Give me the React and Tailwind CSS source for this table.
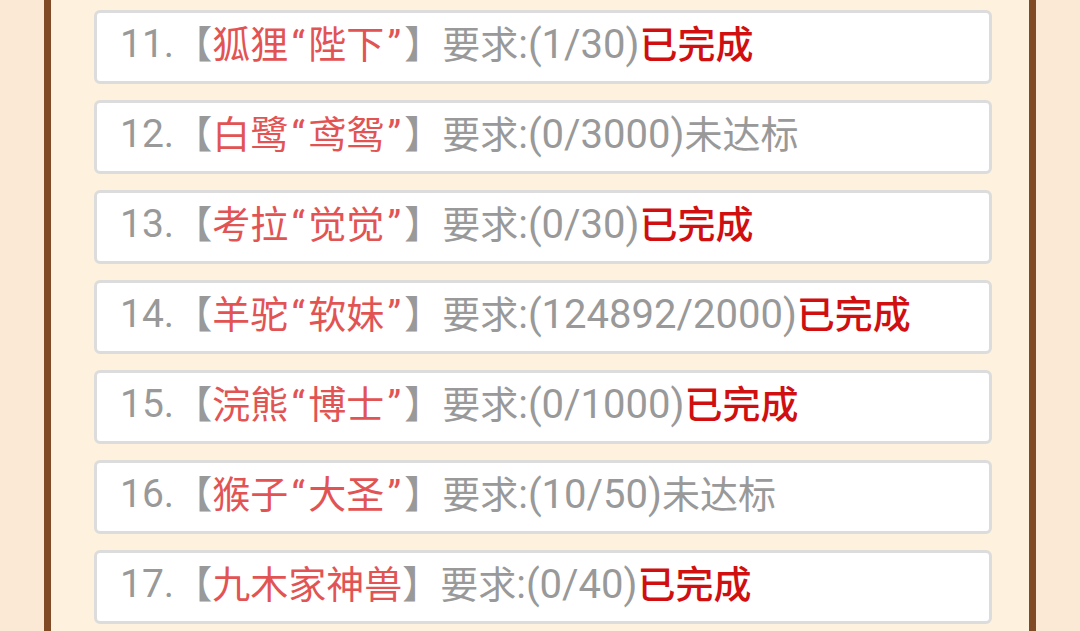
import React from 'react';

const tasks = [
  { no: 11, name: ['狐狸', '陛下'], req: '(1/30)', done: true },
  { no: 12, name: ['白鹭', '鸢鸳'], req: '(0/3000)', done: false },
  { no: 13, name: ['考拉', '觉觉'], req: '(0/30)', done: true },
  { no: 14, name: ['羊驼', '软妹'], req: '(124892/2000)', done: true },
  { no: 15, name: ['浣熊', '博士'], req: '(0/1000)', done: true },
  { no: 16, name: ['猴子', '大圣'], req: '(10/50)', done: false },
  { no: 17, name: ['九木家神兽'], req: '(0/40)', done: true },
];

function Name({ parts }) {
  if (parts.length === 1) return <span className="text-[#e25454]">{parts[0]}</span>;
  return (
    <span className="text-[#e25454]">
      {parts[0]}
      <span className="inline-block w-[20px] text-center">“</span>
      {parts[1]}
      <span className="inline-block w-[20px] text-center">”</span>
    </span>
  );
}

export default function App() {
  return (
    <div
      className="w-[1080px] h-[631px] overflow-hidden bg-[#fbe9d5] flex"
      style={{ fontFamily: 'Roboto, "Noto Sans CJK SC", sans-serif' }}
    >
      <div className="ml-[44px] w-[992px] h-full border-x-[7px] border-[#7f4a25] bg-[#fef1dd] pl-[43px] pr-[37px] pt-[10px]">
        <div className="flex flex-col gap-[16px]">
          {tasks.map((t) => (
            <div
              key={t.no}
              className="h-[74px] bg-white border-[3px] border-[#dcdcdc] rounded-[6px] flex items-center pl-[23px] pb-[5px] text-[38px] leading-none text-[#999999] whitespace-nowrap"
            >
              <span className="text-[39px]">{t.no}.</span>
              <span>【</span>
              <Name parts={t.name} />
              <span>】</span>
              <span>要求</span>
              <span className="text-[40px]">:{t.req}</span>
              <span className={t.done ? 'text-[#d01010] font-medium' : 'text-[#999999]'}>
                {t.done ? '已完成' : '未达标'}
              </span>
            </div>
          ))}
        </div>
      </div>
    </div>
  );
}
